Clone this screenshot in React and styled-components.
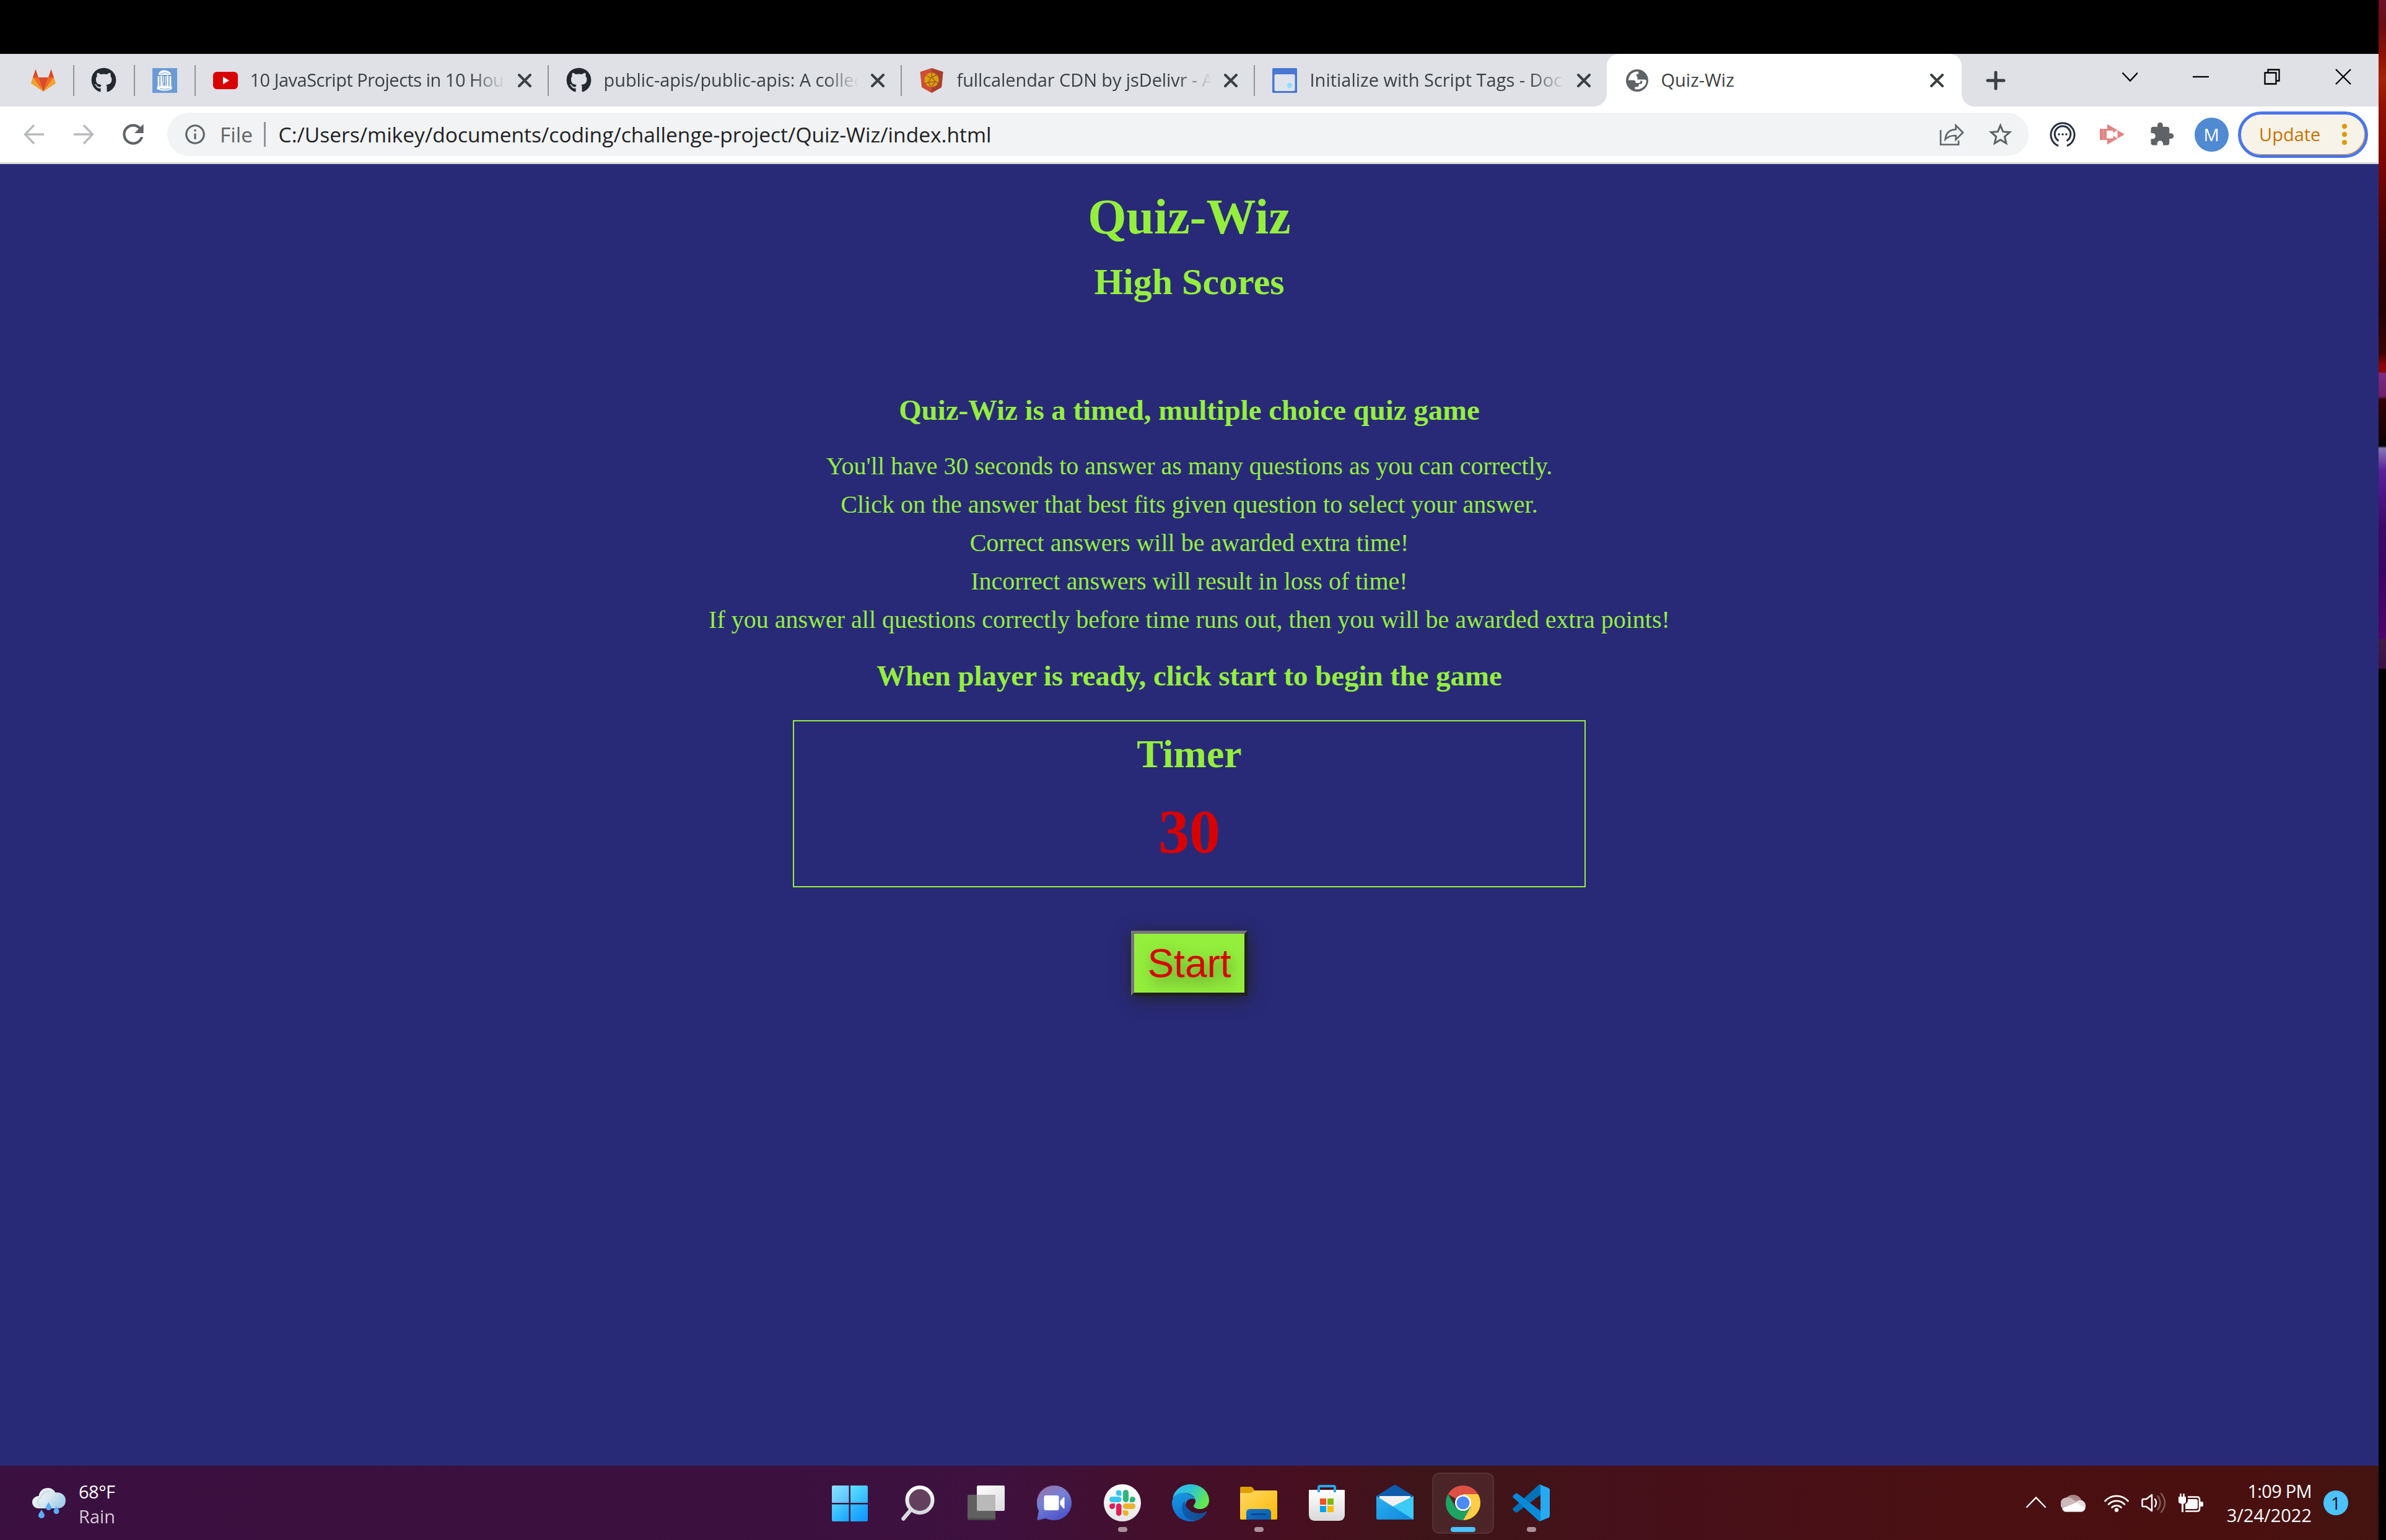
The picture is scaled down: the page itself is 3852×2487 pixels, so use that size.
import React from "react";
import styled, { createGlobalStyle } from "styled-components";
import { FaGithub } from "react-icons/fa";
import { MdExtension, MdStarBorder, MdRefresh, MdInfoOutline } from "react-icons/md";

const ui = `"Open Sans", "Noto Sans", sans-serif`;
const serif = `"Liberation Serif", "Times New Roman", serif`;
const lime = "#94ef3c";

const GlobalStyle = createGlobalStyle`
  body { margin: 0; background: #000; }
  * { box-sizing: border-box; }
  svg { display: block; flex: none; }
`;

const Desktop = styled.div`
  display: flex;
  width: 3852px;
  height: 2487px;
  background: #000;
  overflow: hidden;
`;
const Screen = styled.div`
  width: 3840px;
  height: 2487px;
  padding-top: 87px;
  display: flex;
  flex-direction: column;
`;
const Wallpaper = styled.div`
  width: 12px;
  height: 1080px;
  background: linear-gradient(#701029 0, #6a0c14 40px, #8d1204 90px, #a32206 125px, #8f1003 180px,
    #7d0602 260px, #560302 340px, #330203 420px, #220103 500px, #3a0203 570px, #8a0508 590px,
    #8a0508 600px, #7c2a80 603px, #6f1f66 640px, #330203 645px, #180103 700px, #050001 720px,
    #8576b4 724px, #5a1f96 760px, #3b0a68 850px, #3a0463 920px, #4d036b 1031px, #421a49 1032px, #391142 1080px);
`;

/* tab strip */
const TabStrip = styled.div`
  height: 85px;
  flex: none;
  display: flex;
  align-items: center;
  padding-left: 22px;
  background: #dfe1e6;
`;
const Divider = styled.div`
  width: 2.5px;
  height: ${(p) => p.$h}px;
  flex: none;
  background: #909397;
`;
const PinnedTab = styled.div`
  width: 95.5px;
  flex: none;
  display: flex;
  justify-content: center;
`;
const Tab = styled.div`
  position: relative;
  width: ${(p) => (p.$active ? 573 : 567.5)}px;
  height: 85px;
  flex: none;
  display: flex;
  align-items: center;
  padding: 0 ${(p) => (p.$active ? 29 : 26)}px 0 ${(p) => (p.$active ? 30 : 27.5)}px;
  background: ${(p) => (p.$active ? "#fff" : "transparent")};
  border-radius: 20px 20px 0 0;
  ${(p) =>
    p.$active &&
    `&::before, &::after {
      content: "";
      position: absolute;
      bottom: 0;
      width: 20px;
      height: 20px;
    }
    &::before { left: -20px; background: radial-gradient(circle at 0 0, transparent 19.5px, #fff 20px); }
    &::after { right: -20px; background: radial-gradient(circle at 100% 0, transparent 19.5px, #fff 20px); }`}
`;
const TabTitle = styled.div`
  flex: 1;
  margin: 0 20px 2px ${(p) => p.$left || 21}px;
  overflow: hidden;
  white-space: nowrap;
  font: 29px/44px ${ui};
  letter-spacing: ${(p) => p.$ls || 0}px;
  color: #3c4043;
  ${(p) => p.$fade && "mask-image: linear-gradient(90deg, #000 calc(100% - 55px), transparent);"}
`;
const NewTab = styled.div`
  margin-left: 39px;
  flex: 1;
`;
const WindowControls = styled.div`
  display: flex;
  align-self: flex-start;
`;
const Control = styled.div`
  width: 115px;
  height: 73px;
  display: flex;
  align-items: center;
  justify-content: center;
`;

/* toolbar */
const Toolbar = styled.div`
  height: 93px;
  flex: none;
  display: flex;
  align-items: center;
  padding-left: 15px;
  background: #fff;
  border-bottom: 3px solid #dadbdf;
`;
const IconCell = styled.div`
  width: 80px;
  flex: none;
  display: flex;
  justify-content: center;
  color: #5f6368;
`;
const AddressBar = styled.div`
  width: 3005px;
  height: 70px;
  margin: 0 15px;
  padding: 0 23px 0 26px;
  display: flex;
  align-items: center;
  border-radius: 35px;
  background: #f1f3f4;
  color: #5f6368;
`;
const Scheme = styled.div`
  width: 50px;
  margin: 0 21px 0 21px;
  white-space: nowrap;
  font: 33.5px/50px ${ui};
`;
const Url = styled.div`
  flex: 1;
  margin-left: 21px;
  white-space: nowrap;
  font: 33.5px/50px ${ui};
  letter-spacing: 0.03px;
  color: #202124;
`;
const BarIcons = styled.div`
  display: flex;
  gap: 36px;
  align-items: center;
`;
const Avatar = styled.div`
  width: 55px;
  height: 55px;
  border-radius: 50%;
  background: #4f8ad3;
  color: #fff;
  text-align: center;
  font: 28px/55px ${ui};
`;
const UpdateButton = styled.div`
  width: 210px;
  height: 75px;
  margin-left: 3px;
  padding: 0 29px 0 29px;
  display: flex;
  align-items: center;
  justify-content: space-between;
  border: 5px solid #4a76ea;
  border-radius: 38px;
  background: #f8f3e9;
  box-shadow: inset -1px -1px 0 #d9952c;
  color: #c67400;
  font: 29px/44px ${ui};
`;

/* page */
const Page = styled.main`
  flex: 1;
  display: flex;
  flex-direction: column;
  align-items: center;
  padding-top: 39px;
  background: #292a77;
  color: ${lime};
  font-family: ${serif};
  text-align: center;
`;
const Title = styled.h1`
  margin: 0;
  font-size: 80px;
  line-height: 92px;
`;
const Subtitle = styled.h2`
  margin: 24px 0 0;
  font-size: 60px;
  line-height: 70px;
`;
const Heading = styled.h3`
  margin: ${(p) => p.$top}px 0 0;
  font-size: 46.8px;
  line-height: 54px;
`;
const Rules = styled.div`
  margin-top: 33px;
  font-size: 40px;
  line-height: 62px;
`;
const Rule = styled.p`
  margin: 0;
`;
const TimerBox = styled.section`
  width: 1280px;
  height: 270px;
  margin-top: 45px;
  padding-top: 16px;
  border: 2px solid ${lime};
`;
const TimerLabel = styled.div`
  font-weight: bold;
  font-size: 64px;
  line-height: 74px;
`;
const TimerValue = styled.div`
  margin-top: 30px;
  font-weight: bold;
  font-size: 100px;
  line-height: 116px;
  color: #d90000;
`;
const StartButton = styled.button`
  width: 188px;
  height: 105px;
  margin-top: 70px;
  padding: 0;
  border: 5px solid;
  border-color: #767676 #212121 #212121 #767676;
  background: ${lime};
  color: #d90000;
  font: 64px/74px "Liberation Sans", Arial, sans-serif;
  text-shadow: 2px 10px 22px rgba(40, 40, 40, 0.5);
  box-shadow: 2px 5px 25px rgba(33, 33, 33, 0.9);
`;

/* taskbar */
const Taskbar = styled.footer`
  height: 120px;
  flex: none;
  display: grid;
  grid-template-columns: 1322px 1fr 589px;
  background: linear-gradient(90deg, #3a1040 0, #3b103e 900px, #3e113f 1600px, #430f2c 1850px, #470f20 2100px,
    #3d1518 2300px, #401418 2430px, #46101a 2600px, #4a1012 3200px, #4a1010 3650px, #421411 3840px);
`;
const Weather = styled.div`
  display: flex;
  align-items: center;
  padding-left: 50px;
`;
const WeatherText = styled.div`
  margin: 4px 0 0 18px;
  font: 29px/40px ${ui};
  color: #fff;
`;
const Line = styled.div`
  letter-spacing: ${(p) => p.$ls || 0}px;
  opacity: ${(p) => p.$o || 1};
  white-space: nowrap;
`;
const Apps = styled.div`
  display: flex;
  gap: 10px;
  padding-top: 11px;
`;
const AppButton = styled.div`
  width: 100px;
  height: 99px;
  display: flex;
  flex-direction: column;
  align-items: center;
  padding-top: 19px;
  border-radius: 12px;
  ${(p) =>
    p.$active &&
    "background: rgba(255,255,255,0.07); box-shadow: inset 0 0 0 2.5px rgba(255,255,255,0.05);"}
`;
const Running = styled.div`
  width: ${(p) => (p.$active ? 40 : 15)}px;
  height: 8px;
  margin-top: 9px;
  border-radius: 4px;
  background: ${(p) => (p.$active ? "#4cc2ff" : "#a8919b")};
`;
const Tray = styled.div`
  display: flex;
  align-items: center;
  justify-content: flex-end;
  padding-right: 49px;
`;
const TrayIcons = styled.div`
  display: flex;
  align-items: center;
  gap: 20px;
  margin-right: 38px;
`;
const SyncGroup = styled.div`
  display: flex;
  align-items: center;
  gap: 22px;
  margin-right: 10px;
`;
const Clock = styled.div`
  width: 137px;
  display: flex;
  flex-direction: column;
  align-items: flex-end;
  font: 29px/39px ${ui};
  color: #fff;
`;
const Badge = styled.div`
  width: 40px;
  height: 40px;
  margin-left: 19px;
  border-radius: 50%;
  background: #4cc2ff;
  color: #111;
  text-align: center;
  font: 28px/40px ${ui};
`;

/* icons */
const GitlabIcon = () => (
  <svg width="40" height="40" viewBox="0 0 40 40">
    <path d="M7.5 1.5 12 15H3z M32.5 1.5 37 15h-9z" fill="#db4b26" />
    <path d="M3 15h9l8 23z M37 15h-9l-8 23z" fill="#f26a26" />
    <path d="M12 15h16l-8 23z" fill="#db4b26" />
    <path d="M3 15 0 24.500 20 38z M37 15 40 24.500 20 38z" fill="#f0a22a" />
  </svg>
);
const PillarIcon = () => (
  <svg width="40" height="40" viewBox="0 0 40 40">
    <rect width="40" height="40" fill="#6b9bd4" />
    <path d="M10 11C10 6 14 3.500 19 3.500s11 2.500 11 7.500z" fill="#fff" />
    <path d="M10 13v18M14.500 12v20M24.500 12v20M29 13v18" stroke="#fff" strokeWidth="2.800" fill="none" />
    <path d="M18 13v10h-1v8M21 13v18" stroke="#fff" strokeWidth="1.200" fill="none" />
    <path d="M7.500 30.500q12-4 24 0v3.500q-12 5-24 0z" fill="#fff" />
    <path d="M13 9.500q7-4 14 0" stroke="#6b9bd4" strokeWidth="1" fill="none" />
    <path d="M12 33q8 2.500 16 0" stroke="#6b9bd4" strokeWidth="1" fill="none" />
  </svg>
);
const YoutubeIcon = () => (
  <svg width="40" height="40" viewBox="0 0 40 40">
    <rect y="6" width="40" height="28" rx="6" fill="#d80000" />
    <path d="M16 14v12l10-6z" fill="#fff" />
  </svg>
);
const JsDelivrIcon = () => (
  <svg width="40" height="40" viewBox="0 0 40 40">
    <path d="M20 0 38.500 6 36 31 20 40 4 31 1.500 6z" fill="#d04d38" />
    <path d="M20 0 38.500 6 36 31 20 40z" fill="#a8402f" />
    <circle cx="20" cy="19" r="11.500" fill="#d9a209" />
    <path d="M20 8v6l-5 9-6 2M20 14l6 8 5 3M15 23l11-1-6 8M12 12l6 4M28 11l-8 4M15 23l3 7" stroke="#a85a1c" strokeWidth="1.500" fill="none" />
  </svg>
);
const CalendarIcon = () => (
  <svg width="40" height="40" viewBox="0 0 40 40">
    <rect width="40" height="40" rx="1.500" fill="#4977d2" />
    <rect x="3.500" y="10" width="33" height="27" rx="2" fill="#dfe3ec" />
    <circle cx="28" cy="28" r="4.200" fill="#93dcff" />
  </svg>
);
const GlobeIcon = () => (
  <svg width="40" height="40" viewBox="0 0 40 40">
    <circle cx="19" cy="20" r="18" fill="#5f6368" />
    <path d="M21 5.500C12 5 6 10.500 4.800 19.500H13q3.500 0 3.500 3v1.500h6q2-1 2-3.500v-2h-5v-3.500q0-1.500-1.500-2V9.500h3.500z" fill="#fff" />
    <path d="M24 18.500h6.500q3.500 0 3.500 2.500-1 10-12 13.200h-6.500v-4h4.500q2-1 2-4.500h3.500q2-1 2-3.700-.5-2-3.500-2z" fill="#fff" />
  </svg>
);
const CloseIcon = () => (
  <svg width="22" height="22" viewBox="0 0 22 22">
    <path d="M2 2l18 18M20 2 2 20" stroke="#3c4043" strokeWidth="4" strokeLinecap="round" />
  </svg>
);
const PlusIcon = () => (
  <svg width="32" height="32" viewBox="0 0 32 32">
    <path d="M16 3v26M3 16h26" stroke="#3c4043" strokeWidth="5" strokeLinecap="round" />
  </svg>
);
const ControlIcon = ({ d }) => (
  <svg width="26" height="26" viewBox="0 0 26 26">
    <path d={d} stroke="#000" strokeWidth="2.300" fill="none" />
  </svg>
);
const ArrowIcon = ({ d }) => (
  <svg width="34" height="34" viewBox="0 0 34 34">
    <path d={d} stroke="#b9babd" strokeWidth="3.400" fill="none" />
  </svg>
);
const ShareIcon = () => (
  <svg width="40" height="40" viewBox="0 0 40 40">
    <path d="M2 13v23.500h29v-6.500" stroke="#5f6368" strokeWidth="2.600" fill="none" />
    <path d="M26.500 5.500 38 17 26.500 28.500V22C19 21.500 14 23 9.500 28 10.500 18 16 12.500 26.500 12z" stroke="#5f6368" strokeWidth="2.600" fill="none" strokeLinejoin="miter" />
  </svg>
);
const PodcastIcon = () => (
  <svg width="42" height="42" viewBox="0 0 42 42">
    <g stroke="#263040" fill="none" strokeWidth="3">
      <path d="M14 39.500A19 19 0 1 1 28 39.500" />
      <path d="M14.500 31.500A12.800 12.800 0 1 1 27.500 31.500" />
    </g>
    <g fill="#263040">
      <circle cx="15" cy="21" r="1.800" /><circle cx="21" cy="21" r="1.800" /><circle cx="27" cy="21" r="1.800" />
    </g>
  </svg>
);
const RecorderIcon = () => (
  <svg width="40" height="40" viewBox="0 0 40 40">
    <path d="M0 11h12V3.500L40 20 12 36.500V29H0z" fill="#e48383" />
    <path d="M11 14h10.500v4l7-5v14l-7-5v4.500H11z" fill="#fff" />
    <path d="M6 11v18" stroke="#eda5a5" strokeWidth="1" />
  </svg>
);
const DotsIcon = () => (
  <svg width="8" height="34" viewBox="0 0 8 34">
    <g fill="#dd9a00"><circle cx="4" cy="4" r="4" /><circle cx="4" cy="17" r="4" /><circle cx="4" cy="30" r="4" /></g>
  </svg>
);
const RainIcon = () => (
  <svg width="59" height="54" viewBox="0 0 59 54">
    <defs>
      <linearGradient id="cloud" x1="0" y1="0" x2="1" y2="0.500">
        <stop offset="0.100" stopColor="#f6f8fa" /><stop offset="0.600" stopColor="#d8e7f0" /><stop offset="1" stopColor="#a6cfe8" />
      </linearGradient>
    </defs>
    <path d="M13 36C6 36 2 31 2 26s4-9.500 10.500-10C14 7 20 3 27 3c6 0 10 2.500 12.500 7.500C49 9 56 15 56 23c0 8-5.500 13-13 13z" fill="url(#cloud)" />
    <path d="M16 32C9 29 9 20 16 19c1-8 8-11 14-10" stroke="#c6d8e4" strokeWidth="2.500" fill="none" opacity=".8" />
    <g fill="#5badf5">
      <path d="M17 38c3 5 5 7 5 9a5 5 0 0 1-10 0c0-2 2-4 5-9z" />
      <path d="M28.500 26c3 5 4.500 7 4.500 8.500a4.500 4.500 0 0 1-9 0c0-1.500 1.500-3.500 4.500-8.500z" />
      <path d="M41 32c3 5 4.500 7 4.500 8.500a4.500 4.500 0 0 1-9 0c0-1.500 1.500-3.500 4.500-8.500z" />
    </g>
  </svg>
);
const AppSvg = ({ children }) => (
  <svg width="60" height="60" viewBox="0 0 60 60">{children}</svg>
);
const Gradient = ({ id, from, to, mid, x2 = 1, y2 = 1 }) => (
  <linearGradient id={id} x1="0" y1="0" x2={x2} y2={y2}>
    <stop offset="0" stopColor={from} />
    {mid && <stop offset="0.500" stopColor={mid} />}
    <stop offset="1" stopColor={to} />
  </linearGradient>
);
const WindowsIcon = () => (
  <AppSvg>
    <Gradient id="w1" from="#8ae3ff" to="#54bfff" /><Gradient id="w2" from="#5fe2ff" to="#2bb2ff" />
    <Gradient id="w3" from="#52d4ff" to="#16a2ff" /><Gradient id="w4" from="#35bfff" to="#0b93ff" />
    <path d="M1 30V4q0-2 2-2h25.500v28z" fill="url(#w1)" />
    <path d="M31 30V2h26q2 0 2 2v26z" fill="url(#w2)" />
    <path d="M1 32.500v25.500q0 2 2 2h25.500v-27.500z" fill="url(#w3)" />
    <path d="M31 32.500v27.500h26q2 0 2-2v-25.500z" fill="url(#w4)" />
  </AppSvg>
);
const SearchIcon = () => (
  <AppSvg>
    <Gradient id="sg" from="#ffffff" to="#d3d8dc" x2={0} />
    <path d="M17 43 6.500 55.500" stroke="#d6dadd" strokeWidth="6.500" strokeLinecap="round" />
    <circle cx="33" cy="25.500" r="20.500" fill="#65405e" stroke="url(#sg)" strokeWidth="6" />
  </AppSvg>
);
const TaskViewIcon = () => (
  <AppSvg>
    <Gradient id="tv" from="#ffffff" to="#dcdcdc" />
    <rect x="15" y="2" width="45" height="41" rx="2" fill="url(#tv)" />
    <rect x="0" y="17" width="45" height="41" rx="2" fill="#606060" />
    <path d="M15 17h30v26H17q-2 0-2-2z" fill="#b9b9b9" />
    <path d="M0 55h45v1q0 2-2 2H2q-2 0-2-2z" fill="#474747" />
  </AppSvg>
);
const ChatIcon = () => (
  <AppSvg>
    <Gradient id="ch" from="#a0719f" mid="#7380d8" to="#5058c8" x2={0.5} />
    <path d="M30 2c16 0 28 13 28 28S46 58 30 58c-5 0-10-1-14-3L4 58q-2 0-1.500-2L5 43c-2-4-3-8-3-13C2 14 14 2 30 2z" fill="url(#ch)" />
    <rect x="13.500" y="18" width="24" height="24" rx="3" fill="#fff" />
    <path d="M39.500 27l5.500-6q1.500-1 1.500 1v16q0 2-1.500 1l-5.500-6z" fill="#fff" />
  </AppSvg>
);
const SlackIcon = () => (
  <AppSvg>
    <Gradient id="sl" from="#ffffff" to="#e6e6e6" x2={0} />
    <circle cx="30" cy="30" r="30" fill="url(#sl)" />
    <g fill="#36c5f0"><rect x="9" y="20" width="19.500" height="9" rx="4.500" /><path d="M28.500 18.500H24A4.500 4.500 0 1 1 28.500 13z" /></g>
    <g fill="#2eb67d"><rect x="31" y="9" width="9" height="20" rx="4.500" /><path d="M42 29v-4.500A4.500 4.500 0 1 1 46 29z" /></g>
    <g fill="#ecb22e"><rect x="31" y="31" width="20" height="9" rx="4.500" /><path d="M31 42h4.500A4.500 4.500 0 1 1 31 46.500z" /></g>
    <g fill="#e01e5a"><rect x="20" y="31" width="8.500" height="20" rx="4.250" /><path d="M18 31v4.500A4.500 4.500 0 1 1 13.500 31z" /></g>
  </AppSvg>
);
const EdgeIcon = () => (
  <AppSvg>
    <Gradient id="e1" from="#38bdf5" mid="#2cc3d6" to="#62e84e" y2={0.45} />
    <Gradient id="e2" from="#1a9be0" to="#0c6fcf" x2={0.3} />
    <Gradient id="e3" from="#0f5cab" to="#154a8c" x2={1} y2={0} />
    <path d="M1 23C4 9 16 0 30 0c17 0 30 12 30 26 0 9-7 14-14 14-6 0-11-2-11-5 0-2 3-3 3-8 0-7-8-13-18-13C11 14 4 18 1 23z" fill="url(#e1)" />
    <path d="M0 29C1 19 9 14 18 14c9 0 17 4 20 11-9-5-16 2-16 9 0 12 9 25 18 24-3 1.500-6 2-10 2C13 60 0 46 0 29z" fill="url(#e2)" />
    <path d="M21 27c-7 6-6 19 1 26 6 6 15 7 22 4 6-3 10-7 12-11 1-2-.5-2.500-2-1.500-10 5-22 2-28-5-4-4-6-9-5-12.500z" fill="url(#e3)" />
  </AppSvg>
);
const FolderIcon = () => (
  <AppSvg>
    <Gradient id="fo" from="#ffd863" to="#fbb906" /><Gradient id="fb" from="#1673c6" to="#0a5cad" />
    <path d="M0 18V6q0-2 2-2h15q3 0 5 4l3 4v6z" fill="#dfa000" />
    <path d="M0 14h17l7-4h34q2 0 2 2v43q0 2-2 2H2q-2 0-2-2z" fill="url(#fo)" />
    <path d="M10 57V46q0-6 6-6h28q6 0 6 6v11z" fill="url(#fb)" />
    <path d="M19 48.500h22" stroke="#0a4483" strokeWidth="2.500" strokeLinecap="round" />
  </AppSvg>
);
const StoreIcon = () => (
  <AppSvg>
    <Gradient id="st" from="#ffffff" to="#d9d9d9" x2={0} />
    <path d="M1 10q0-1 1-1h56q1 0 1 1v38q0 11-10 11H11Q1 59 1 48z" fill="url(#st)" />
    <path d="M17 13V5q0-2 2-2h22q2 0 2 2v8" stroke="#24a7ee" strokeWidth="4" fill="none" />
    <path d="M19 23h10v10H19z" fill="#f25022" /><path d="M31 23h10v10H31z" fill="#7fba00" />
    <path d="M19 35h10v10H19z" fill="#00a4ef" /><path d="M31 35h10v10H31z" fill="#ffb900" />
  </AppSvg>
);
const MailIcon = () => (
  <AppSvg>
    <Gradient id="ml" from="#2bb2f0" to="#0f86dd" />
    <path d="M0 19 28 1.500q2-1 4 0L60 19v4H0z" fill="#0b5cad" />
    <path d="M5 19h50v10L30 44 5 29z" fill="#f1f1f1" />
    <path d="M60 19v38H30L22 38z" fill="#3ccbf6" />
    <path d="M0 19l60 38H2q-2 0-2-2z" fill="url(#ml)" />
  </AppSvg>
);
const ChromeIcon = () => (
  <AppSvg>
    <path d="M30 30 5.750 16A28 28 0 0 1 54.250 16z" fill="#dd5144" />
    <path d="M30 16H54.250A28 28 0 0 1 30 58L42 37z" fill="#ffcd46" />
    <path d="M5.750 16 18 37 30 44 42 37 30 58A28 28 0 0 1 5.750 16z" fill="#1da362" />
    <circle cx="30" cy="30" r="13" fill="#fff" />
    <circle cx="30" cy="30" r="10.500" fill="#4c8bf5" />
  </AppSvg>
);
const VsCodeIcon = () => (
  <AppSvg>
    <path d="M45 0v17L8 45q-2 1-3.500 0L1 42q-1.500-2 0-3.500L41 2q2-2 4-2z" fill="#0072b8" />
    <path d="M45 60V43L8 15q-2-1-3.500 0L1 18q-1.500 2 0 3.500L41 58q2 2 4 2z" fill="#078ad8" />
    <path d="M43 0l15 6q2 1 2 3v42q0 2-2 3l-15 6q2-1 2-3V3q0-2-2-3z" fill="#27a9f2" />
  </AppSvg>
);
const CaretIcon = () => (
  <svg width="36" height="24" viewBox="0 0 36 24"><path d="M2.500 19.500 18 3.500l15.500 16" stroke="#fff" strokeWidth="2.400" fill="none" /></svg>
);
const CloudIcon = () => (
  <svg width="40" height="32" viewBox="0 0 40 32">
    <path d="M7 11a13.500 11 0 0 1 26 0L20 19z" fill="#a88788" />
    <path d="M1 23A10 10 0 0 1 9 7.500c5-1 9 1 12 4l7 5-24 10z" fill="#cdb9ba" />
    <path d="M24 15c4-4 10-5 13-1 4 3 4 10 1 13z" fill="#e6dcdc" />
    <path d="M2 25 25 15.500l14.500 9.500c-1 3.500-4 5.500-7 5.500H9C5 30.500 3 28.500 2 25z" fill="#fff" />
  </svg>
);
const WifiIcon = () => (
  <svg width="40" height="30" viewBox="0 0 40 30">
    <g stroke="#fff" strokeWidth="2.700" fill="none" strokeLinecap="round">
      <path d="M1.500 12a25 25 0 0 1 37 0" /><path d="M7 17.500a18 18 0 0 1 26 0" /><path d="M12.500 22.500a10.500 10.500 0 0 1 15 0" />
    </g>
    <circle cx="20" cy="26.500" r="3.200" fill="#fff" />
  </svg>
);
const SpeakerIcon = () => (
  <svg width="40" height="36" viewBox="0 0 40 36">
    <g fill="none" strokeWidth="2.500" strokeLinecap="round">
      <path d="M17 5v26l-9-7H3q-1.500 0-1.500-1.500v-9Q1.500 12 3 12h5z" stroke="#fff" strokeLinejoin="round" />
      <path d="M22 12q4 6 0 12" stroke="#fff" />
      <path d="M26.500 7q8 11 0 22M32 3q12 15 0 30" stroke="#835a5a" />
    </g>
  </svg>
);
const BatteryIcon = () => (
  <svg width="40" height="34" viewBox="0 0 40 34">
    <path d="M15 7.500h15q4 0 4 4v15q0 4-4 4H11" stroke="#fff" strokeWidth="2.600" fill="none" />
    <path d="M15 11h13q3 0 3 3v10q0 3-3 3H11v-8q4-2 4-5z" fill="#fff" />
    <path d="M35 15h3q2 0 2 2v4q0 2-2 2h-3z" fill="#fff" />
    <path d="M0 7h12v8q0 3-4 3.500V32H5V18.500Q0 18 0 15z" fill="#fff" />
    <path d="M3.500 2v6M8.500 2v6" stroke="#fff" strokeWidth="2.500" />
  </svg>
);

const tabs = [
  { title: "10 JavaScript Projects in 10 Hou", icon: <YoutubeIcon />, ls: -0.5, left: 20 },
  { title: "public-apis/public-apis: A collec", icon: <FaGithub size={41} color="#24292f" />, ls: -0.07, left: 20 },
  { title: "fullcalendar CDN by jsDelivr - A", icon: <JsDelivrIcon />, ls: -0.1 },
  { title: "Initialize with Script Tags - Docs", icon: <CalendarIcon />, ls: 0, last: true },
];

const rules = [
  "You'll have 30 seconds to answer as many questions as you can correctly.",
  "Click on the answer that best fits given question to select your answer.",
  "Correct answers will be awarded extra time!",
  "Incorrect answers will result in loss of time!",
  "If you answer all questions correctly before time runs out, then you will be awarded extra points!",
];

const apps = [
  { icon: <WindowsIcon /> },
  { icon: <SearchIcon /> },
  { icon: <TaskViewIcon /> },
  { icon: <ChatIcon /> },
  { icon: <SlackIcon />, running: true },
  { icon: <EdgeIcon /> },
  { icon: <FolderIcon />, running: true },
  { icon: <StoreIcon /> },
  { icon: <MailIcon /> },
  { icon: <ChromeIcon />, running: true, active: true },
  { icon: <VsCodeIcon />, running: true },
];

const controls = ["M1.500 6.500 14 19.500 26 6.500", "M0 13h26", "M1.500 6.500h18v18h-18z M6.500 6.500V1.500h18v18h-5", "M1 1l24 24M25 1 1 25"];

export default function App() {
  return (
    <>
      <GlobalStyle />
      <Desktop>
        <Screen>
          <TabStrip>
            <PinnedTab><GitlabIcon /></PinnedTab>
            <Divider $h={50} />
            <PinnedTab><FaGithub size={41} color="#24292f" /></PinnedTab>
            <Divider $h={50} />
            <PinnedTab><PillarIcon /></PinnedTab>
            <Divider $h={50} />
            {tabs.map((t) => (
              <React.Fragment key={t.title}>
                <Tab>
                  {t.icon}
                  <TabTitle $fade $ls={t.ls} $left={t.left}>{t.title}</TabTitle>
                  <CloseIcon />
                </Tab>
                {!t.last && <Divider $h={50} />}
              </React.Fragment>
            ))}
            <Tab $active>
              <GlobeIcon />
              <TabTitle $left={18}>Quiz-Wiz</TabTitle>
              <CloseIcon />
            </Tab>
            <NewTab><PlusIcon /></NewTab>
            <WindowControls>
              {controls.map((d) => (
                <Control key={d}><ControlIcon d={d} /></Control>
              ))}
            </WindowControls>
          </TabStrip>

          <Toolbar>
            <IconCell><ArrowIcon d="M33 17H3M17 2 2.500 17 17 32" /></IconCell>
            <IconCell><ArrowIcon d="M1 17h30M17 2l14.500 15L17 32" /></IconCell>
            <IconCell><MdRefresh size={50} /></IconCell>
            <AddressBar>
              <MdInfoOutline size={38} />
              <Scheme>File</Scheme>
              <Divider $h={40} />
              <Url>C:/Users/mikey/documents/coding/challenge-project/Quiz-Wiz/index.html</Url>
              <BarIcons>
                <ShareIcon />
                <MdStarBorder size={45} />
              </BarIcons>
            </AddressBar>
            <IconCell><PodcastIcon /></IconCell>
            <IconCell><RecorderIcon /></IconCell>
            <IconCell><MdExtension size={42} /></IconCell>
            <IconCell><Avatar>M</Avatar></IconCell>
            <UpdateButton>Update<DotsIcon /></UpdateButton>
          </Toolbar>

          <Page>
            <Title>Quiz-Wiz</Title>
            <Subtitle>High Scores</Subtitle>
            <Heading $top={145}>Quiz-Wiz is a timed, multiple choice quiz game</Heading>
            <Rules>
              {rules.map((r) => <Rule key={r}>{r}</Rule>)}
            </Rules>
            <Heading $top={32}>When player is ready, click start to begin the game</Heading>
            <TimerBox>
              <TimerLabel>Timer</TimerLabel>
              <TimerValue>30</TimerValue>
            </TimerBox>
            <StartButton>Start</StartButton>
          </Page>

          <Taskbar>
            <Weather>
              <RainIcon />
              <WeatherText>
                <Line $ls={-0.5}>68°F</Line>
                <Line $o={0.78}>Rain</Line>
              </WeatherText>
            </Weather>
            <Apps>
              {apps.map((a, i) => (
                <AppButton key={i} $active={a.active}>
                  {a.icon}
                  {a.running && <Running $active={a.active} />}
                </AppButton>
              ))}
            </Apps>
            <Tray>
              <TrayIcons>
                <SyncGroup><CaretIcon /><CloudIcon /></SyncGroup>
                <WifiIcon /><SpeakerIcon /><BatteryIcon />
              </TrayIcons>
              <Clock>
                <Line $ls={-0.7}>1:09 PM</Line>
                <Line>3/24/2022</Line>
              </Clock>
              <Badge>1</Badge>
            </Tray>
          </Taskbar>
        </Screen>
        <Wallpaper />
      </Desktop>
    </>
  );
}
